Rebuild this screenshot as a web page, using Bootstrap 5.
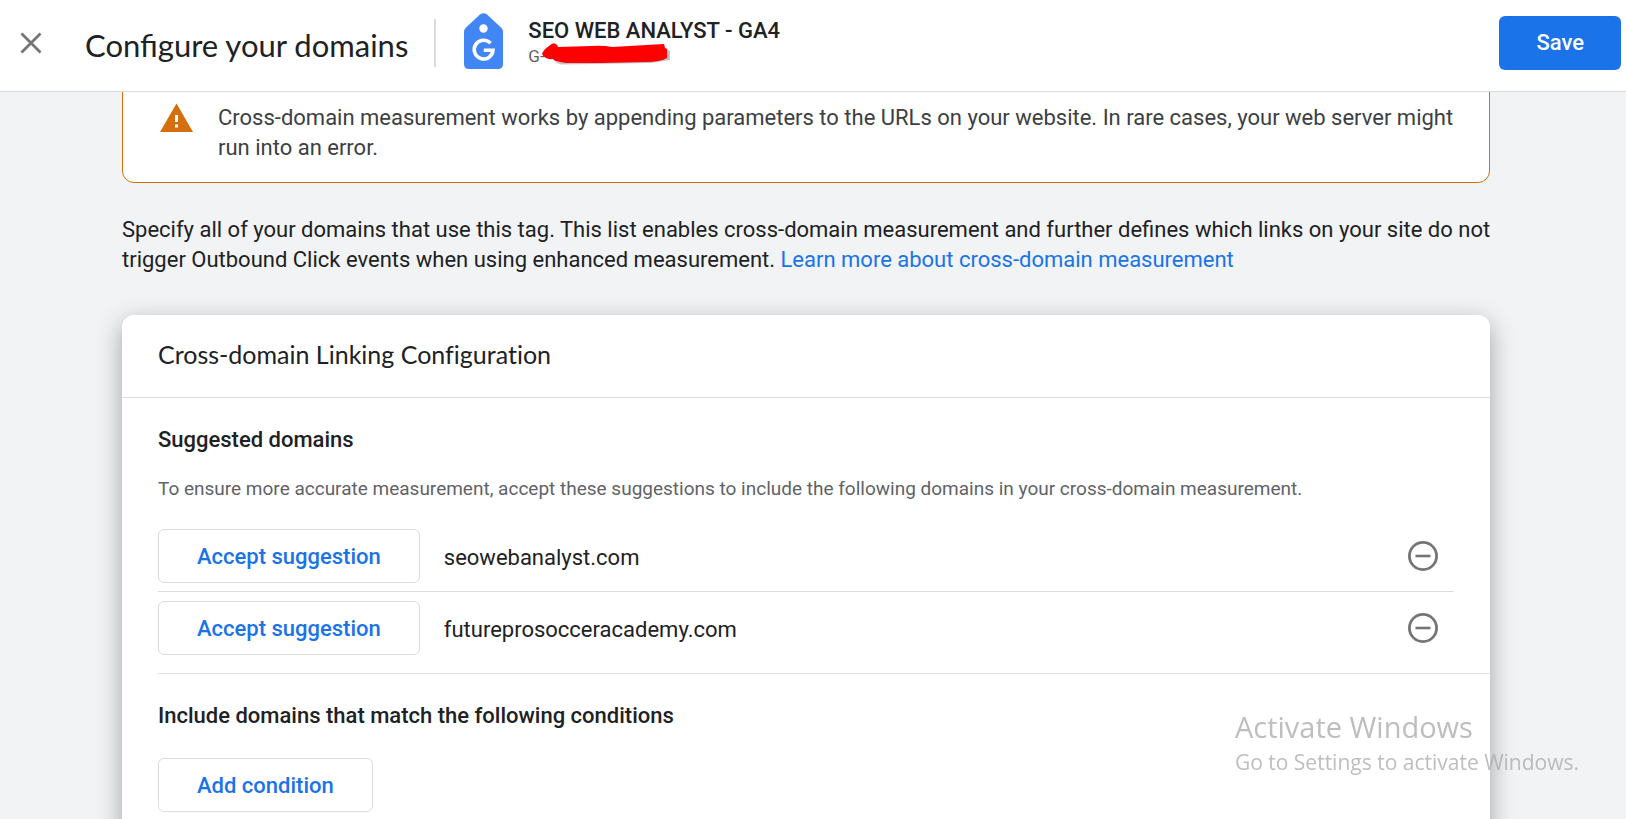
<!DOCTYPE html>
<html lang="en">
<head>
<meta charset="utf-8">
<meta name="viewport" content="width=device-width, initial-scale=1">
<title>Configure your domains</title>
<link href="https://cdn.jsdelivr.net/npm/bootstrap@5.3.0/dist/css/bootstrap.min.css" rel="stylesheet">
<style>
  :root { --ink: #202124; --muted-ink: #5f6368; --line: #dadce0; --blue: #1a73e8; --warn: #d56e0c; }
  body { font-family: Roboto, sans-serif; font-size: 22px; line-height: 30px; color: var(--ink); background: #f1f3f4; }
  .display-face { font-family: Lato, Roboto, sans-serif; }
  .top-bar { height: 92px; border-bottom: 1px solid var(--line); padding: 0 5px 6px 20px; }
  .page-title { font-size: 31px; line-height: 40px; margin: 0 0 0 43px; padding-top: 4px; }
  .bar-rule { width: 2px; height: 48px; background: var(--line); margin: 0 28px 0 26px; }
  .tag-text { margin-left: 25px; }
  .tag-name { font-size: 22px; line-height: 26px; font-weight: 500; }
  .tag-id { font-size: 17px; line-height: 24px; color: var(--muted-ink); }
  .scribble { left: 13px; top: -2px; }
  .btn-tall { height: 54px; padding: 0 38px; border-radius: 6px; font-family: Roboto, sans-serif; font-size: 22px; font-weight: 500; }
  .btn-save { background: var(--blue); color: #fff; padding: 0 36px; }
  .btn-line { border: 1px solid var(--line); color: var(--blue); background: #fff; }
  .btn-save:hover { background: #1765cc; color: #fff; }
  .btn-line:hover { background: #f6fafe; color: var(--blue); border-color: var(--line); }
  .page-body { padding: 0 136px 0 122px; }
  .notice { margin-top: -12px; padding: 22px 32px 19px 36px; border: 1px solid var(--warn); border-radius: 12px; background: #fff; color: #3c4043; gap: 25px; }
  .intro { margin: 32px -8px 40px 0; }
  .intro a { color: var(--blue); text-decoration: none; }
  .panel { background: #fff; border-radius: 12px; box-shadow: 0 8px 24px rgba(60,64,67,.45); padding-bottom: 40px; }
  .panel-title { font-size: 25px; line-height: 30px; margin: 0; padding: 24px 36px 28px; border-bottom: 1px solid var(--line); font-variant-ligatures: none; }
  .section { margin-left: 36px; padding-top: 27px; }
  .section h3 { font-size: 22px; line-height: 30px; font-weight: 500; margin: 0; }
  .hint { font-size: 19px; line-height: 30px; color: var(--muted-ink); margin: 19px 0 25px; }
  .domain-row { gap: 24px; }
  .domain-row + .domain-row { border-top: 1px solid var(--line); padding-top: 9px; margin-top: 8px; }
  .domain-list { margin-right: 36px; padding-bottom: 18px; }
  .conditions h3 { margin-bottom: 27px; }
  .watermark { right: 47px; bottom: 41px; z-index: 10; color: #a8a8a8; opacity: .75; font-family: "Open Sans", "Noto Sans", sans-serif; pointer-events: none; }
  .watermark-title { font-size: 29px; line-height: 38px; }
  .watermark-note { font-size: 21px; line-height: 32px; }
</style>
</head>
<body class="vh-100 d-flex flex-column overflow-hidden">
<header class="top-bar bg-white d-flex align-items-center flex-shrink-0">
  <button type="button" class="btn p-0 border-0 d-flex" aria-label="Close">
    <svg width="22" height="22" viewBox="0 0 22 22" fill="none" stroke="#757575" stroke-width="2.8"><path d="M1.5 1.5l19 19M20.500 1.500l-19 19"/></svg>
  </button>
  <h1 class="page-title display-face fw-normal">Configure your domains</h1>
  <div class="bar-rule"></div>
  <svg class="mb-1" width="39" height="56" viewBox="0 0 39 56" aria-hidden="true">
    <path fill="#4285f4" d="M16 1.500Q19.500-1 23 1.500L37 14.500Q39 16.500 39 19V51Q39 56 34 56H5Q0 56 0 51V19Q0 16.500 2 14.500Z"/>
    <circle cx="19.500" cy="15.500" r="4.200" fill="#fff"/>
    <path d="M26.500 30.200A9.400 9.400 0 1 0 29 37.200H19.800" fill="none" stroke="#fff" stroke-width="3.600"/>
  </svg>
  <div class="tag-text">
    <div class="tag-name">SEO WEB ANALYST - GA4</div>
    <div class="tag-id position-relative">G-
      <svg class="scribble position-absolute" width="132" height="26" viewBox="0 0 132 26" aria-hidden="true">
        <path d="M14 20L20 22.500 110 21 129 18V9L122 5" fill="#999" opacity=".6"/>
        <path fill="red" d="M1 12Q3 7 8 4Q13-1 16 3L17 5 50 4Q62 3 71 5L123 2 124 6 126 7V16Q120 20 104 20L60 21H25L14 19 12 17Q4 18 1 12Z"/>
      </svg>
    </div>
  </div>
  <button type="button" class="btn btn-tall btn-save ms-auto">Save</button>
</header>

<main class="page-body flex-grow-1 overflow-hidden">
  <div class="notice d-flex align-items-start" role="note">
    <svg class="flex-shrink-0" width="34" height="30" viewBox="0 0 34 30" aria-hidden="true">
      <path fill="#d56e0c" d="M17.500 0.500L34 29H1Z"/><path fill="#fff" d="M16 12h3v7h-3zM16 21.500h3v3h-3z"/>
    </svg>
    <div>Cross-domain measurement works by appending parameters to the URLs on your website. In rare cases, your web server might run into an error.</div>
  </div>
  <p class="intro">Specify all of your domains that use this tag. This list enables cross-domain measurement and further defines which links on your site do not trigger Outbound Click events when using enhanced measurement. <a href="#">Learn more about cross-domain measurement</a></p>

  <section class="panel">
    <h2 class="panel-title display-face fw-normal">Cross-domain Linking Configuration</h2>
    <div class="section border-bottom">
      <h3>Suggested domains</h3>
      <p class="hint">To ensure more accurate measurement, accept these suggestions to include the following domains in your cross-domain measurement.</p>
      <ul class="domain-list list-unstyled mb-0">
        <li class="domain-row d-flex align-items-center">
          <button type="button" class="btn btn-tall btn-line">Accept suggestion</button>
          <span class="pt-1">seowebanalyst.com</span>
          <button type="button" class="btn p-0 border-0 d-flex ms-auto me-3" aria-label="Dismiss seowebanalyst.com">
            <svg width="30" height="30" viewBox="0 0 30 30" fill="none" stroke="#757575"><circle cx="15" cy="15" r="13.600" stroke-width="2.800"/><path d="M7.500 15h15" stroke-width="2.600"/></svg>
          </button>
        </li>
        <li class="domain-row d-flex align-items-center">
          <button type="button" class="btn btn-tall btn-line">Accept suggestion</button>
          <span class="pt-1">futureprosocceracademy.com</span>
          <button type="button" class="btn p-0 border-0 d-flex ms-auto me-3" aria-label="Dismiss futureprosocceracademy.com">
            <svg width="30" height="30" viewBox="0 0 30 30" fill="none" stroke="#757575"><circle cx="15" cy="15" r="13.600" stroke-width="2.800"/><path d="M7.500 15h15" stroke-width="2.600"/></svg>
          </button>
        </li>
      </ul>
    </div>
    <div class="section conditions">
      <h3>Include domains that match the following conditions</h3>
      <button type="button" class="btn btn-tall btn-line">Add condition</button>
    </div>
  </section>
</main>

<aside class="watermark position-fixed">
  <div class="watermark-title">Activate Windows</div>
  <div class="watermark-note">Go to Settings to activate Windows.</div>
</aside>
<script src="https://cdn.jsdelivr.net/npm/bootstrap@5.3.0/dist/js/bootstrap.bundle.min.js"></script>
</body>
</html>
